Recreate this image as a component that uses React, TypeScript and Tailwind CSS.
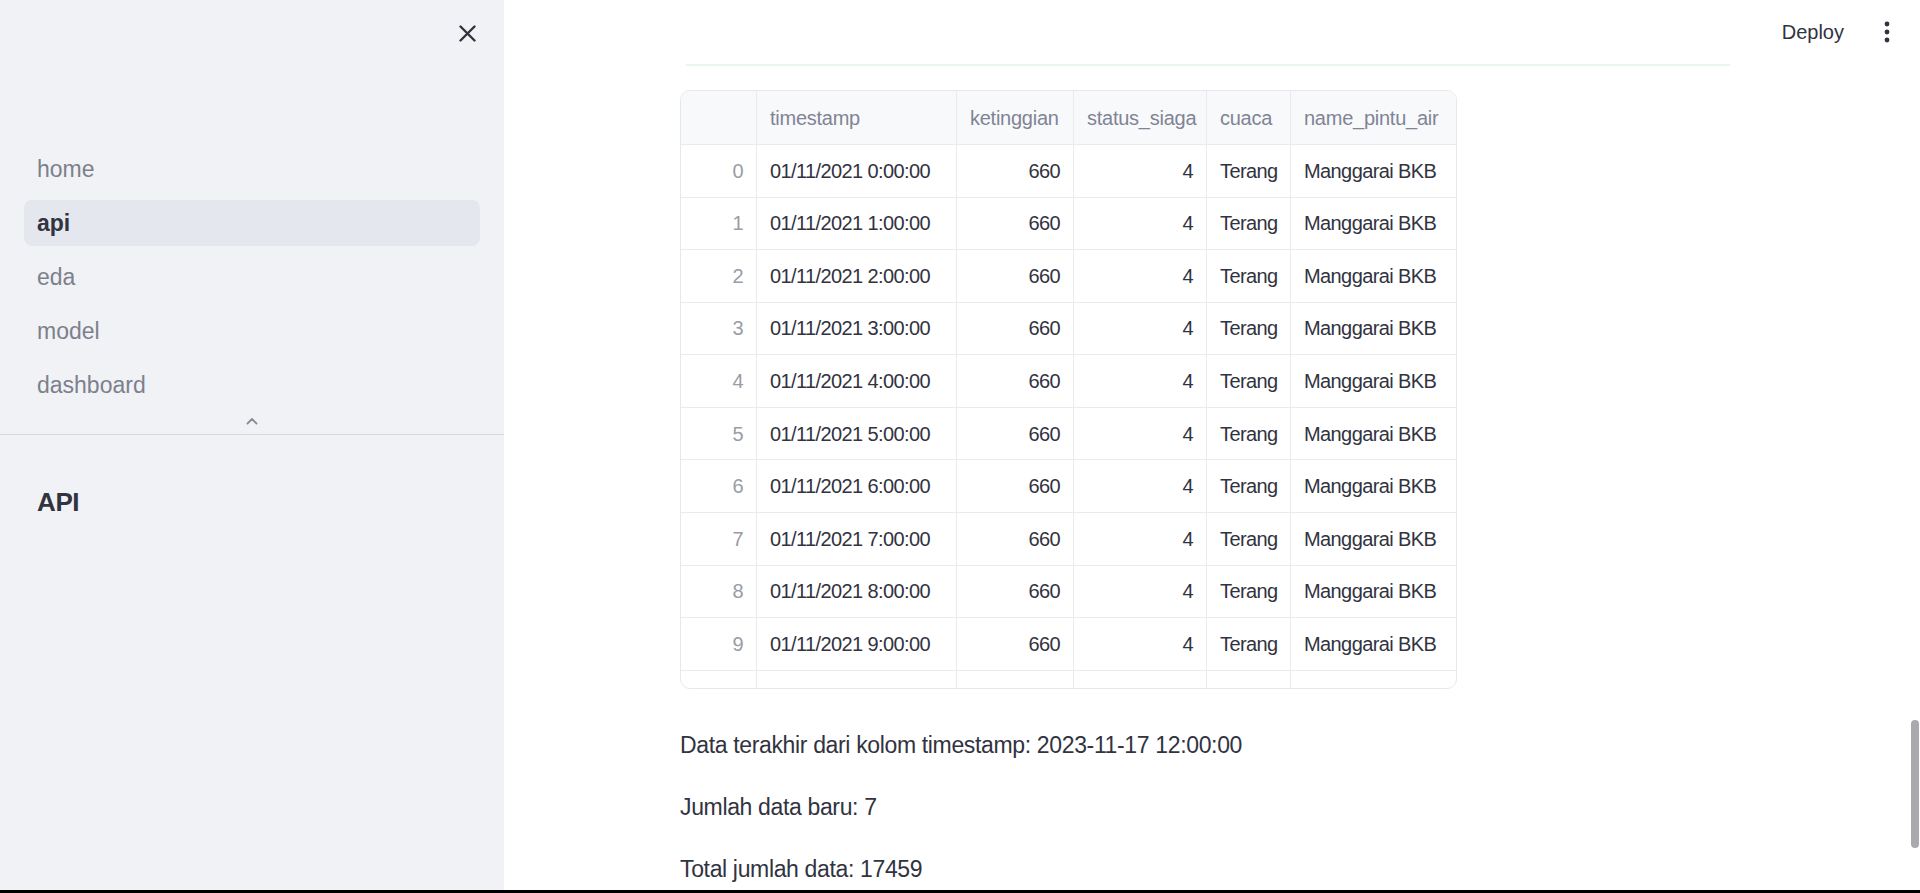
import React from 'react';

const navItems = ['home', 'api', 'eda', 'model', 'dashboard'];

const rows = Array.from({ length: 11 }, (_, i) => ({
  idx: i,
  timestamp: `01/11/2021 ${i}:00:00`,
  ketinggian: 660,
  status: 4,
  cuaca: 'Terang',
  pintu: 'Manggarai BKB',
}));

const font = "font-['Liberation_Sans',Arial,sans-serif]";

function CloseIcon() {
  return (
    <svg width="17" height="17" viewBox="0 0 17 17" fill="none">
      <path d="M1.5 1.5L15.5 15.5M15.5 1.5L1.5 15.5" stroke="#31333f" strokeWidth="2.4" strokeLinecap="round" />
    </svg>
  );
}

function Sidebar() {
  return (
    <aside className="w-[504px] shrink-0 bg-[#f0f2f6] flex flex-col">
      <div className="h-[66px] flex items-center justify-end pr-[28px]">
        <CloseIcon />
      </div>

      {/* page links */}
      <nav className="mt-[80px] mx-[24px] flex flex-col gap-2">
        {navItems.map((item) => (
          <div
            key={item}
            className={`h-[46px] flex items-center pl-[13px] rounded-lg text-[23px] ${
              item === 'api' ? 'bg-[#e4e7ee] font-bold text-[#31333f]' : 'text-[#7d808c]'
            }`}
          >
            {item}
          </div>
        ))}
      </nav>

      <div className="h-[27px] flex items-center justify-center border-b border-[#d6d7dc]">
        <svg width="12" height="8" viewBox="0 0 12 8" fill="none">
          <path d="M1.5 6.5L6 2L10.5 6.5" stroke="#8a8d98" strokeWidth="1.8" strokeLinecap="round" strokeLinejoin="round" />
        </svg>
      </div>

      <h2 className="pt-[49px] pl-[37px] text-[26px] leading-[36px] font-bold tracking-[-0.4px] text-[#31333f]">API</h2>
    </aside>
  );
}

function Cell({
  w,
  align = 'left',
  tone = 'text-[#31333f]',
  last = false,
  children,
}: {
  w: string;
  align?: 'left' | 'right';
  tone?: string;
  last?: boolean;
  children: React.ReactNode;
}) {
  return (
    <div
      className={`${w} shrink-0 h-full flex items-center px-[13px] whitespace-nowrap ${tone} ${
        align === 'right' ? 'justify-end' : 'justify-start'
      } ${last ? '' : 'border-r border-[#ebebef]'}`}
    >
      {children}
    </div>
  );
}

function DataTable() {
  return (
    <div className="w-[777px] h-[599px] rounded-[10px] border border-[#e8e8ec] overflow-hidden">
      {/* header */}
      <div className="h-[54px] flex bg-[#f8f9fb] border-b border-[#ebebef] text-[20px] tracking-[-0.25px]">
        <Cell w="w-[76px]"> </Cell>
        <Cell w="w-[200px]" tone="text-[#808495]">timestamp</Cell>
        <Cell w="w-[117px]" tone="text-[#808495]">ketinggian</Cell>
        <Cell w="w-[133px]" tone="text-[#808495]">status_siaga</Cell>
        <Cell w="w-[84px]" tone="text-[#808495]">cuaca</Cell>
        <Cell w="w-[220px]" tone="text-[#808495]" last>name_pintu_air</Cell>
      </div>
      {rows.map((r) => (
        <div key={r.idx} className="h-[52.57px] flex border-b border-[#ebebef] text-[20px] tracking-[-0.6px]">
          <Cell w="w-[76px]" align="right" tone="text-[#9a9ca6]">{r.idx}</Cell>
          <Cell w="w-[200px]">{r.timestamp}</Cell>
          <Cell w="w-[117px]" align="right">{r.ketinggian}</Cell>
          <Cell w="w-[133px]" align="right">{r.status}</Cell>
          <Cell w="w-[84px]">{r.cuaca}</Cell>
          <Cell w="w-[220px]" last>{r.pintu}</Cell>
        </div>
      ))}
    </div>
  );
}

export default function App() {
  return (
    <div className={`w-[1920px] h-[893px] flex flex-col overflow-hidden ${font}`}>
      <div className="flex-1 flex min-h-0">
        <Sidebar />

        <main className="flex-1 bg-white relative flex flex-col">
          {/* top bar */}
          <div className="h-[64px] flex items-center justify-end gap-[40px] pr-[30px]">
            <span className="text-[20px] text-[#31333f]">Deploy</span>
            <svg width="6" height="22" viewBox="0 0 6 22" fill="#31333f">
              <circle cx="3" cy="3" r="2.4" />
              <circle cx="3" cy="11" r="2.4" />
              <circle cx="3" cy="19" r="2.4" />
            </svg>
          </div>

          <div className="ml-[176px] w-[1056px] flex flex-col">
            <div className="ml-[6px] w-[1044px] h-[2px] bg-[#e7f8ed]" />

            <div className="mt-[24px]">
              <DataTable />
            </div>

            <div className="mt-[38px] flex flex-col gap-[26px] text-[23px] leading-[36px] tracking-[-0.35px] text-[#31333f]">
              <p>Data terakhir dari kolom timestamp: 2023-11-17 12:00:00</p>
              <p>Jumlah data baru: 7</p>
              <p>Total jumlah data: 17459</p>
            </div>
          </div>

          {/* scrollbar thumb */}
          <div className="absolute right-[1px] top-[720px] w-[8px] h-[128px] rounded-full bg-[#a9a9ae]" />
        </main>
      </div>
      <div className="h-[3px] bg-black" />
    </div>
  );
}
